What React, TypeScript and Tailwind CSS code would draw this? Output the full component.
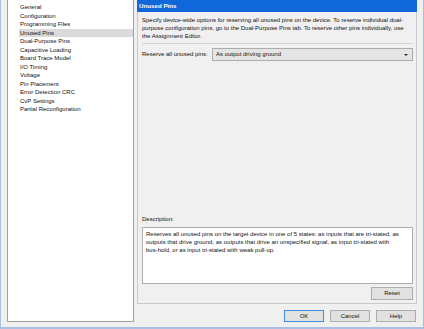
const CATEGORIES = [
  'General',
  'Configuration',
  'Programming Files',
  'Unused Pins',
  'Dual-Purpose Pins',
  'Capacitive Loading',
  'Board Trace Model',
  'I/O Timing',
  'Voltage',
  'Pin Placement',
  'Error Detection CRC',
  'CvP Settings',
  'Partial Reconfiguration',
];

const INTRO = [
  'Specify device-wide options for reserving all unused pins on the device. To reserve individual dual-',
  'purpose configuration pins, go to the Dual-Purpose Pins tab. To reserve other pins individually, use',
  'the Assignment Editor.',
];

const DESCRIPTION = [
  'Reserves all unused pins on the target device in one of 5 states: as inputs that are tri-stated, as',
  'outputs that drive ground, as outputs that drive an unspecified signal, as input tri-stated with',
  'bus-hold, or as input tri-stated with weak pull-up.',
];

function Button({ label, primary }: { label: string; primary?: boolean }) {
  return (
    <button
      className={
        'h-[12px] w-[40px] bg-[#e1e1e1] text-[6px] leading-[10px] text-[#111] border ' +
        (primary ? 'border-[#3c8ce0]' : 'border-[#adadad]')
      }
    >
      {label}
    </button>
  );
}

export default function App() {
  const selected = 'Unused Pins';

  return (
    <div
      className="w-[424px] h-[329px] bg-[#f0f0f0] border-l border-r border-b-2 border-[#a9c0e2] flex overflow-hidden text-[#111] text-[6px]"
      style={{ fontFamily: '"Liberation Sans", Arial, sans-serif' }}
    >
      {/* Category list */}
      <div className="ml-[6px] w-[127px] h-[322px] bg-white border-l border-r border-b border-[#a0a0a0] pt-[3px]">
        {CATEGORIES.map((c) => (
          <div
            key={c}
            className={
              'ml-[11px] pl-[1px] h-[8.5px] leading-[8.5px] whitespace-nowrap ' +
              (c === selected ? 'bg-[#dadada]' : '')
            }
          >
            {c}
          </div>
        ))}
      </div>

      {/* Right side */}
      <div className="ml-[3px] w-[280px] flex flex-col">
        <div className="h-[12px] bg-[#0f67d9] text-white font-bold text-[6.2px] leading-[12px] pl-[2px]">
          Unused Pins
        </div>

        <div className="h-[292px] border-l border-r border-b border-[#c9c9c9] flex flex-col pl-[4px] pr-[3px] pt-[4px] pb-[3px]">
          <div className="leading-[8px]">
            {INTRO.map((l) => (
              <div key={l} className="whitespace-nowrap">
                {l}
              </div>
            ))}
          </div>

          <div className="mt-[3px] border-t border-[#d4d4d4]" />

          <div className="mt-[4px] flex items-center">
            <span className="w-[70px] whitespace-nowrap">Reserve all unused pins:</span>
            <div className="h-[13px] flex-1 bg-[#e5e5e5] border border-[#acacac] flex items-center pl-[3px] pr-[4px]">
              <span className="flex-1">As output driving ground</span>
              <span className="w-0 h-0 border-l-[2px] border-r-[2px] border-t-[2.5px] border-l-transparent border-r-transparent border-t-[#222]" />
            </div>
          </div>

          <div className="flex-1" />

          <div className="leading-[8px] mb-[4px]">Description:</div>
          <div className="h-[57px] bg-white border border-[#abadb3] pl-[3px] pt-[2px] leading-[8px]">
            {DESCRIPTION.map((l) => (
              <div key={l} className="whitespace-nowrap">
                {l}
              </div>
            ))}
          </div>

          <div className="mt-[3px] flex justify-end">
            <button className="h-[13px] w-[42px] bg-[#e1e1e1] border border-[#adadad] text-[6px] text-[#111]">
              Reset
            </button>
          </div>
        </div>

        <div className="mt-[6px] pr-[1px] flex justify-end gap-[6px]">
          <Button label="OK" primary />
          <Button label="Cancel" />
          <Button label="Help" />
        </div>
      </div>
    </div>
  );
}
